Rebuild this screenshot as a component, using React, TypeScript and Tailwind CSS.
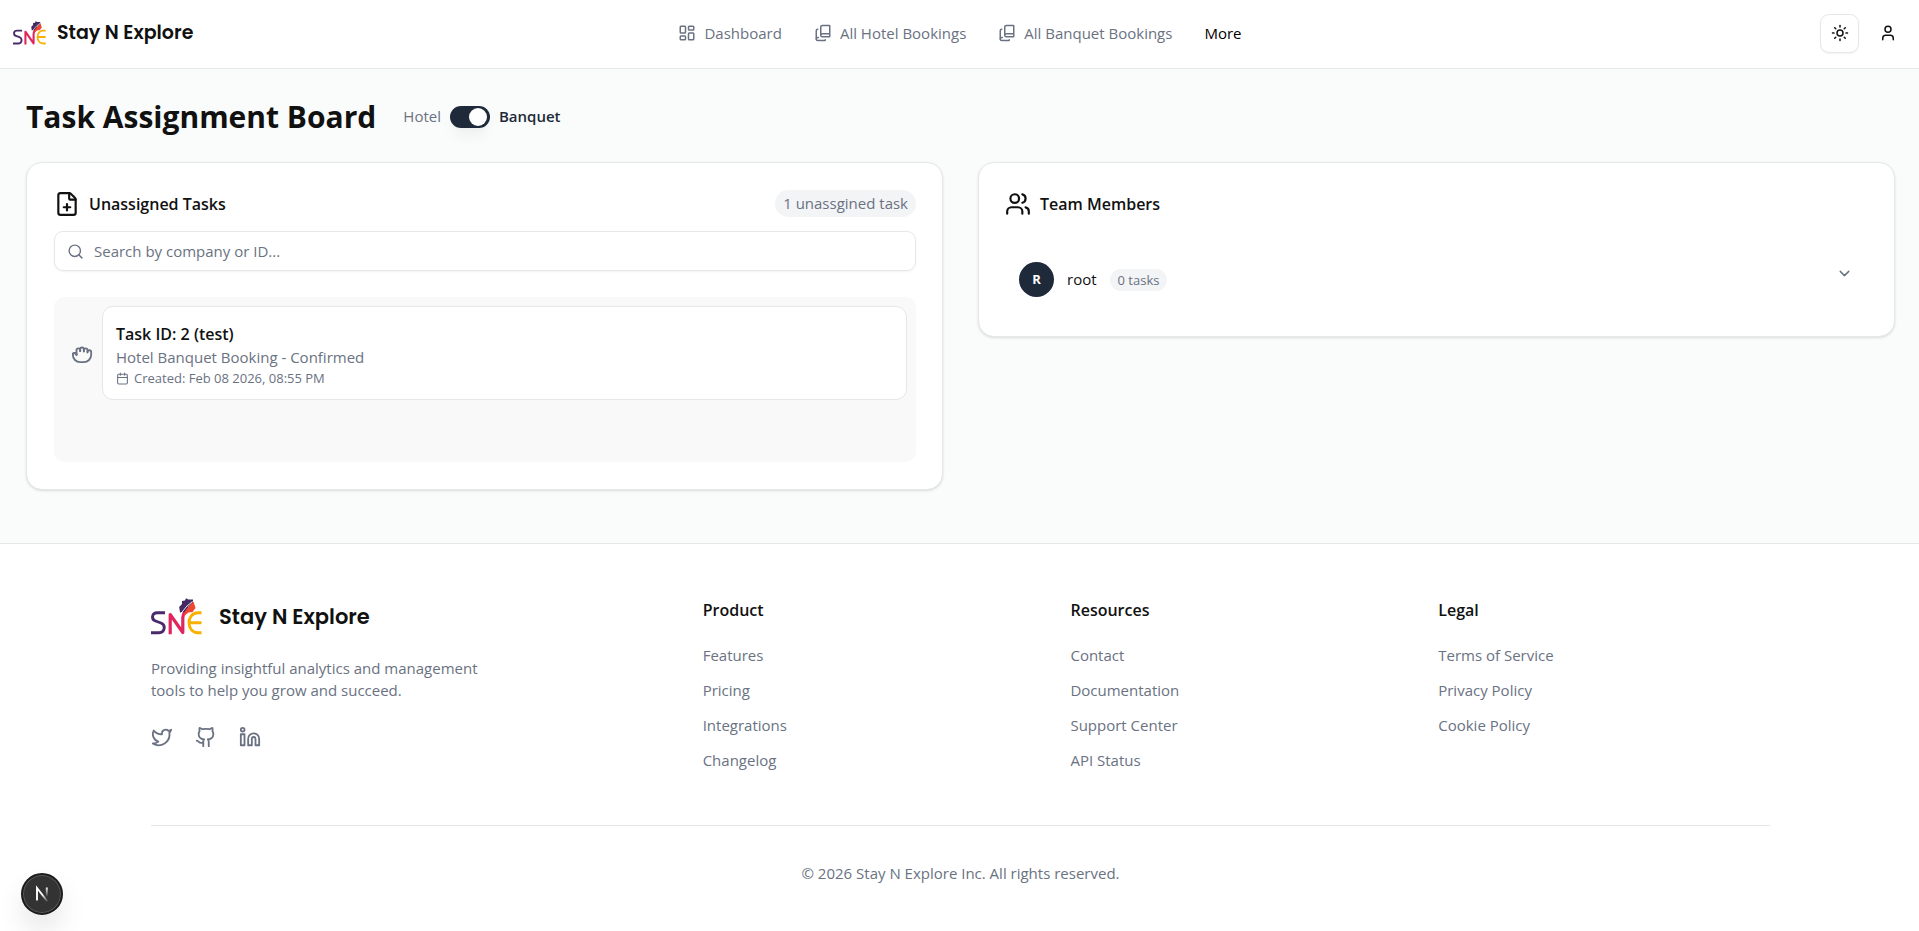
import { useState } from "react";
import {
  BookCopy,
  Calendar,
  ChevronDown,
  FilePlus,
  Github,
  HandGrab,
  LayoutDashboard,
  Linkedin,
  Search,
  Sun,
  Twitter,
  User,
  Users,
} from "lucide-react";

function Logo({ className }: { className: string }) {
  return (
    <svg viewBox="0 0 51 37" className={className} fill="none" aria-hidden="true">
      <path
        d="M14 14.800H6.500C.3 14.800.3 21.500 4.500 23l5.500 2c5 2 4 9.700-2 9.700H0"
        stroke="#4a2a6b"
        strokeWidth="2.900"
      />
      <path
        d="M19.200 36.200V16.500L31.800 34.500V20C31.800 16 34 13 37 9"
        stroke="#e0245e"
        strokeWidth="3.200"
        strokeLinejoin="round"
      />
      <path
        d="M50.500 14.800H47C35 14.800 35 34.700 47 34.700H50.500M38.500 24.700H50.500"
        stroke="#f9b000"
        strokeWidth="2.900"
      />
      <path
        d="M29 14.500L28.200 9l2.800-3V3l3-.5L35 .200l2.500 1.300L42 1.500v3l-4.500 4-4 5.500z"
        fill="#432a63"
      />
      <path d="M42.500 3.500L44.500 10l-3 4-4 .5L32.500 18.500l1.500-5 4.500-6z" fill="#ef4630" />
      <path d="M29.500 16L36 8l5.500-4.500" stroke="#fff" strokeWidth=".9" />
    </svg>
  );
}

const navItems = [
  { label: "Dashboard", Icon: LayoutDashboard },
  { label: "All Hotel Bookings", Icon: BookCopy },
  { label: "All Banquet Bookings", Icon: BookCopy },
];

const footerColumns = [
  { title: "Product", links: ["Features", "Pricing", "Integrations", "Changelog"] },
  { title: "Resources", links: ["Contact", "Documentation", "Support Center", "API Status"] },
  { title: "Legal", links: ["Terms of Service", "Privacy Policy", "Cookie Policy"] },
];

const socials = [
  { label: "Twitter", Icon: Twitter },
  { label: "GitHub", Icon: Github },
  { label: "LinkedIn", Icon: Linkedin },
];

function Header() {
  return (
    <header className="grid h-[69px] grid-cols-[1fr_auto_1fr] items-center border-b border-gray-200 bg-white pr-3 pb-[2px] pl-[13px]">
      <a href="#" className="flex items-center gap-[11px]">
        <Logo className="h-6 w-[33px]" />
        <span className="font-['Poppins','Inter',sans-serif] text-[19px] font-semibold">Stay N Explore</span>
      </a>
      <nav className="flex items-center gap-8 text-[15px] font-medium">
        {navItems.map(({ label, Icon }) => (
          <a key={label} href="#" className="flex items-center gap-2 text-gray-500">
            <Icon size={18} />
            {label}
          </a>
        ))}
        <button type="button" className="text-black">More</button>
      </nav>
      <div className="flex items-center justify-end gap-[9px]">
        <button
          type="button"
          aria-label="Toggle theme"
          className="flex size-[39px] items-center justify-center rounded-[9px] border border-gray-200 bg-white shadow-xs"
        >
          <Sun size={18} />
        </button>
        <button type="button" aria-label="Account" className="flex size-[39px] items-center justify-center">
          <User size={18} />
        </button>
      </div>
    </header>
  );
}

function TypeToggle() {
  const [banquet, setBanquet] = useState(true);
  return (
    <label className="flex items-center gap-[9px] text-[15px]">
      <span className="text-gray-500">Hotel</span>
      <input
        type="checkbox"
        role="switch"
        aria-label="Show banquet tasks"
        checked={banquet}
        onChange={(e) => setBanquet(e.target.checked)}
        className="flex h-[22px] w-10 appearance-none items-center rounded-full bg-gray-300 px-[3px] shadow-lg shadow-black/5 before:size-[18px] before:rounded-full before:bg-white checked:justify-end checked:bg-gray-800"
      />
      <span className="font-semibold text-gray-800">Banquet</span>
    </label>
  );
}

function UnassignedTasks() {
  return (
    <section className="rounded-2xl border border-gray-200 bg-white py-[27px] pr-[26px] pl-[27px] shadow">
      <div className="flex h-[27px] items-center justify-between">
        <h2 className="flex items-center gap-[9px] text-base font-semibold">
          <FilePlus size={26} />
          Unassigned Tasks
        </h2>
        <span className="rounded-full bg-gray-100 px-2 py-[3px] text-[15px] leading-[21px] font-medium text-gray-500">
          1 unassgined task
        </span>
      </div>
      <div className="mt-[14px] flex h-10 items-center gap-[10px] rounded-[9px] border border-gray-200 px-3 shadow-xs">
        <Search size={17} className="text-gray-500" />
        <input
          type="text"
          aria-label="Search by company or ID"
          placeholder="Search by company or ID..."
          className="min-w-0 flex-1 bg-transparent text-[15px] outline-none placeholder:text-gray-500"
        />
      </div>
      <div className="mt-[26px] min-h-[165px] rounded-[10px] bg-[#f9f9f9] p-[9px]">
        <article className="flex items-center">
          <span className="flex w-[39px] justify-center pr-[2px] text-gray-500">
            <HandGrab size={22} />
          </span>
          <div className="flex-1 rounded-[11px] border border-gray-200 bg-white px-[13px] pt-[15px] pb-3">
            <h3 className="text-base leading-6 font-semibold">Task ID: 2 (test)</h3>
            <p className="text-[15px] leading-[23px] text-gray-500">Hotel Banquet Booking - Confirmed</p>
            <p className="flex items-center gap-[5px] text-[13px] leading-[18px] text-gray-500">
              <Calendar size={13} />
              Created: Feb 08 2026, 08:55 PM
            </p>
          </div>
        </article>
      </div>
    </section>
  );
}

function TeamMembers() {
  return (
    <section className="rounded-2xl border border-gray-200 bg-white px-[26px] pt-[27px] pb-[39px] shadow">
      <h2 className="flex h-[27px] items-center gap-[9px] text-base font-semibold">
        <Users size={26} />
        Team Members
      </h2>
      <button type="button" className="mt-[45px] flex w-full items-start justify-between pr-[15px] pl-[14px]">
        <span className="flex items-center gap-[13px]">
          <span className="flex size-[35px] items-center justify-center rounded-full bg-gray-800 text-[13px] font-bold text-white">
            R
          </span>
          <span className="text-[15px] font-medium">root</span>
          <span className="rounded-full bg-gray-100 px-2 text-[13px] leading-[22px] font-medium text-gray-500">0 tasks</span>
        </span>
        <ChevronDown size={17} className="mt-[3px] text-gray-500" />
      </button>
    </section>
  );
}

function Footer() {
  return (
    <footer className="flex-1 border-t border-gray-200 bg-white pt-[53px] pr-[149px] pb-10 pl-[151px] text-[15px]">
      <div className="grid grid-cols-9 gap-9">
        <div className="col-span-3">
          <a href="#" className="flex items-center gap-[17px] pt-px">
            <Logo className="h-[37px] w-[51px]" />
            <span className="font-['Poppins','Inter',sans-serif] text-[21px] font-semibold">Stay N Explore</span>
          </a>
          <p className="mt-[22px] max-w-[340px] leading-[22px] text-gray-500">
            Providing insightful analytics and management tools to help you grow and succeed.
          </p>
          <div className="mt-[25px] flex gap-[22px] text-gray-500">
            {socials.map(({ label, Icon }) => (
              <a key={label} href="#" aria-label={label}>
                <Icon size={22} />
              </a>
            ))}
          </div>
        </div>
        {footerColumns.map(({ title, links }) => (
          <div key={title} className="col-span-2">
            <h3 className="text-base leading-[26px] font-semibold">{title}</h3>
            <ul className="mt-[21px] flex flex-col gap-[13px] leading-[22px] text-gray-500">
              {links.map((link) => (
                <li key={link}>
                  <a href="#">{link}</a>
                </li>
              ))}
            </ul>
          </div>
        ))}
      </div>
      <div className="mt-[54px] border-t border-gray-200 pt-9 text-center leading-[22px] text-gray-500">
        © 2026 Stay N Explore Inc. All rights reserved.
      </div>
    </footer>
  );
}

export default function App() {
  return (
    <div className="flex min-h-screen flex-col bg-[#fafcfb] font-['Open_Sans','Noto_Sans',sans-serif] text-[#111111]">
      <Header />
      <main className="pt-[26px] pr-6 pb-[53px] pl-[26px]">
        <div className="flex h-[43px] items-center gap-[27px]">
          <h1 className="text-[30px] font-bold">Task Assignment Board</h1>
          <TypeToggle />
        </div>
        <div className="mt-6 grid grid-cols-2 items-start gap-[35px]">
          <UnassignedTasks />
          <TeamMembers />
        </div>
      </main>
      <Footer />
      <button
        type="button"
        aria-label="Open developer tools"
        className="fixed bottom-4 left-[21px] flex size-[42px] items-center justify-center rounded-full border-2 border-[#1c1c1c] bg-[#333333] shadow-[0_16px_32px_-8px_rgba(0,0,0,0.24)] ring-1 ring-white/20 ring-inset"
      >
        <svg width="16" height="18" viewBox="0 0 16 18" fill="none" aria-hidden="true">
          <defs>
            <linearGradient id="slant" x1="8" y1="10" x2="14" y2="17" gradientUnits="userSpaceOnUse">
              <stop stopColor="#fff" />
              <stop offset="1" stopColor="#fff" stopOpacity="0" />
            </linearGradient>
            <linearGradient id="stem" x1="13" y1="2" x2="13" y2="12" gradientUnits="userSpaceOnUse">
              <stop stopColor="#fff" />
              <stop offset="1" stopColor="#fff" stopOpacity="0" />
            </linearGradient>
          </defs>
          <path d="M3 15.500V3L13.500 16.500" stroke="url(#slant)" strokeWidth="1.900" />
          <path d="M12.800 2.500V12" stroke="url(#stem)" strokeWidth="1.900" />
        </svg>
      </button>
    </div>
  );
}
